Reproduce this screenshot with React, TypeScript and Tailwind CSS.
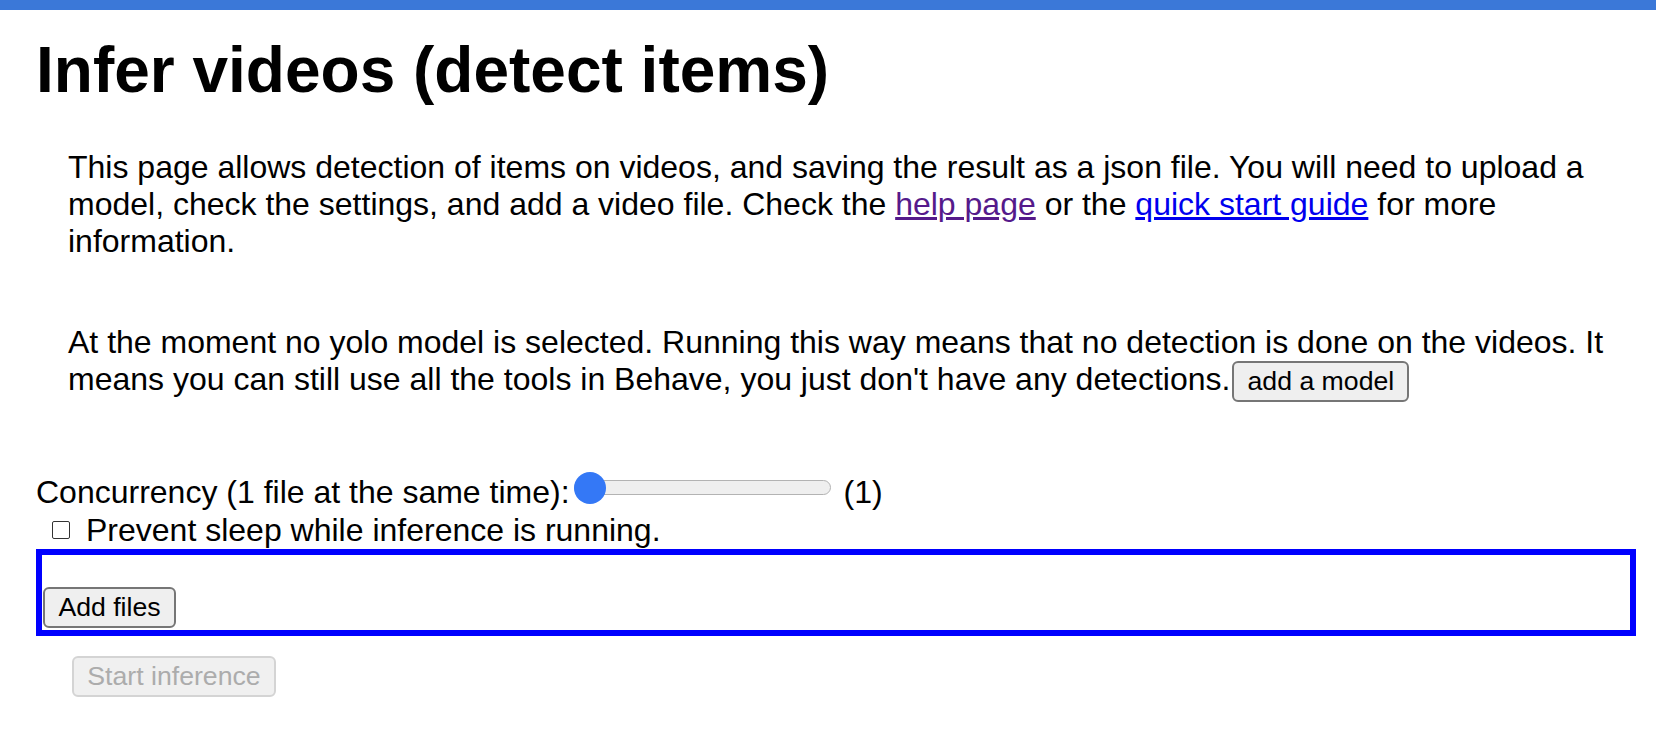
import React from "react";

function Slider() {
	return (
		<div className="relative ml-[4px] mr-[4px] mb-[9px] h-[32px] w-[257px] shrink-0">
			<div className="absolute left-0 right-0 top-[8px] h-[15px] rounded-full border-[1.5px] border-[#b3b3b3] bg-[#efefef]" />
			<div className="absolute left-0 top-0 size-[32px] rounded-full bg-[#3478f6]" />
		</div>
	);
}

const btn =
	"inline-flex items-center justify-center h-[41px] px-[12px] rounded-[6px] border-2 text-[26.67px] leading-[normal]";

export default function App() {
	return (
		<div className="min-h-screen bg-white font-['Liberation_Sans',Arial,sans-serif] text-black">
			<div className="h-[10px] bg-[#3b78d8]" />
			<div className="pl-[36px] pr-[20px]">
				<h1 className="mt-[23px] text-[64px] font-bold leading-[74px]">
					Infer videos (detect items)
				</h1>

				<p className="mt-[42px] ml-[32px] text-[32px] leading-[37px]">
					This page allows detection of items on videos, and saving the result as a json
					file. You will need to upload a model, check the settings, and add a video file.
					Check the{" "}
					<a href="#" className="text-[#551a8b] underline">
						help page
					</a>{" "}
					or the{" "}
					<a href="#" className="text-[#0000ee] underline">
						quick start guide
					</a>{" "}
					for more information.
				</p>

				<p className="mt-[64px] ml-[32px] text-[32px] leading-[37px]">
					At the moment no yolo model is selected. Running this way means that no detection
					is done on the videos. It means you can still use all the tools in Behave, you
					just don't have any detections.
					<button
						className={`${btn} ml-[2px] w-[177px] border-[#767676] bg-[#efefef] align-baseline`}
					>
						add a model
					</button>
				</p>

				<div className="mt-[70px] flex h-[40px] items-center text-[32px]">
					<span>Concurrency (1 file at the same time):</span>
					<Slider />
					<span className="ml-[9px]">(1)</span>
				</div>

				<div className="flex h-[36px] items-center text-[32px]">
					<span className="ml-[16px] h-[18px] w-[18px] shrink-0 rounded-[2px] border-[1.5px] border-[#333]" />
					<span className="ml-[16px]">Prevent sleep while inference is running.</span>
				</div>

				<div className="mt-[1px] h-[87px] border-[6px] border-[#0000ff] pl-[1px] pt-[32px]">
					<button className={`${btn} w-[133px] border-[#767676] bg-[#efefef]`}>
						Add files
					</button>
				</div>

				<div className="mt-[20px] ml-[36px]">
					<button
						disabled
						className={`${btn} w-[204px] border-[#d4d4d4] bg-[#f0f0f0] text-[#acacac]`}
					>
						Start inference
					</button>
				</div>
			</div>
		</div>
	);
}
